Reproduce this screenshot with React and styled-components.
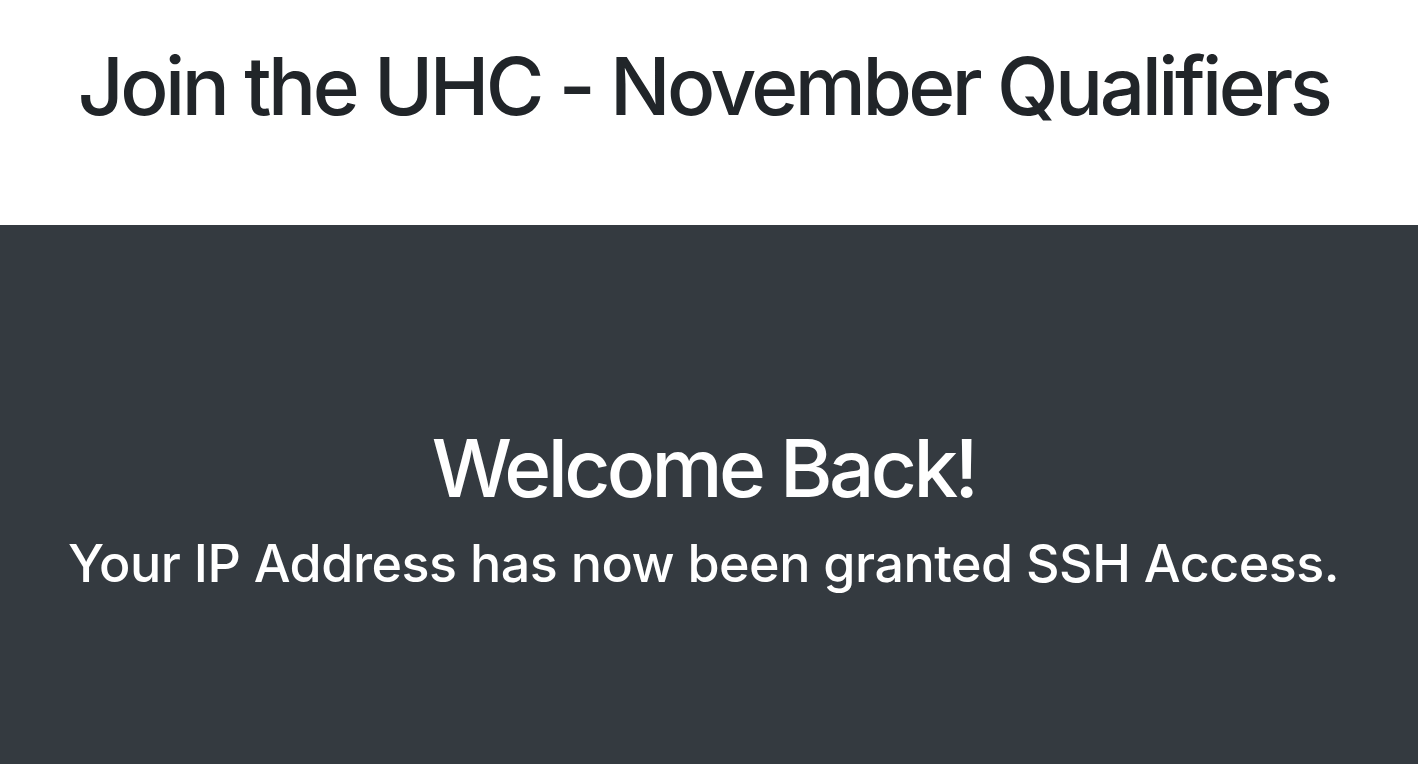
import styled, { createGlobalStyle } from "styled-components";

const GlobalStyle = createGlobalStyle`
  html, body {
    margin: 0;
    padding: 0;
    background: #fff;
  }
  body {
    font-family: Inter, "Noto Sans", sans-serif;
    color: #212529;
  }
`;

const Header = styled.header`
  height: 225px;
  display: flex;
  justify-content: center;
  padding: 38px 11px 0 0;
  box-sizing: border-box;
`;

const Title = styled.h1`
  margin: 0;
  font-weight: 500;
  font-size: 80px;
  line-height: 1.2;
  letter-spacing: -3.5px;
  color: #212529;
`;

const Dark = styled.section`
  background-color: #343a40;
  color: #fff;
  min-height: calc(100vh - 225px);
  display: flex;
  flex-direction: column;
  align-items: center;
  padding: 195px 11px 0 0;
  box-sizing: border-box;
`;

const Heading = styled.h2`
  margin: 0;
  font-weight: 500;
  font-size: 80px;
  line-height: 1.2;
  letter-spacing: -3.6px;
`;

const Sub = styled.p`
  margin: 17px 0 0;
  font-weight: 500;
  font-size: 52px;
  line-height: 1.2;
  letter-spacing: -0.5px;
`;

const App = () => {
  return (
    <>
      <GlobalStyle />
      <Header>
        <Title>Join the UHC - November Qualifiers</Title>
      </Header>
      <Dark>
        <Heading>Welcome Back!</Heading>
        <Sub>Your IP Address has now been granted SSH Access.</Sub>
      </Dark>
    </>
  );
};

export default App;
